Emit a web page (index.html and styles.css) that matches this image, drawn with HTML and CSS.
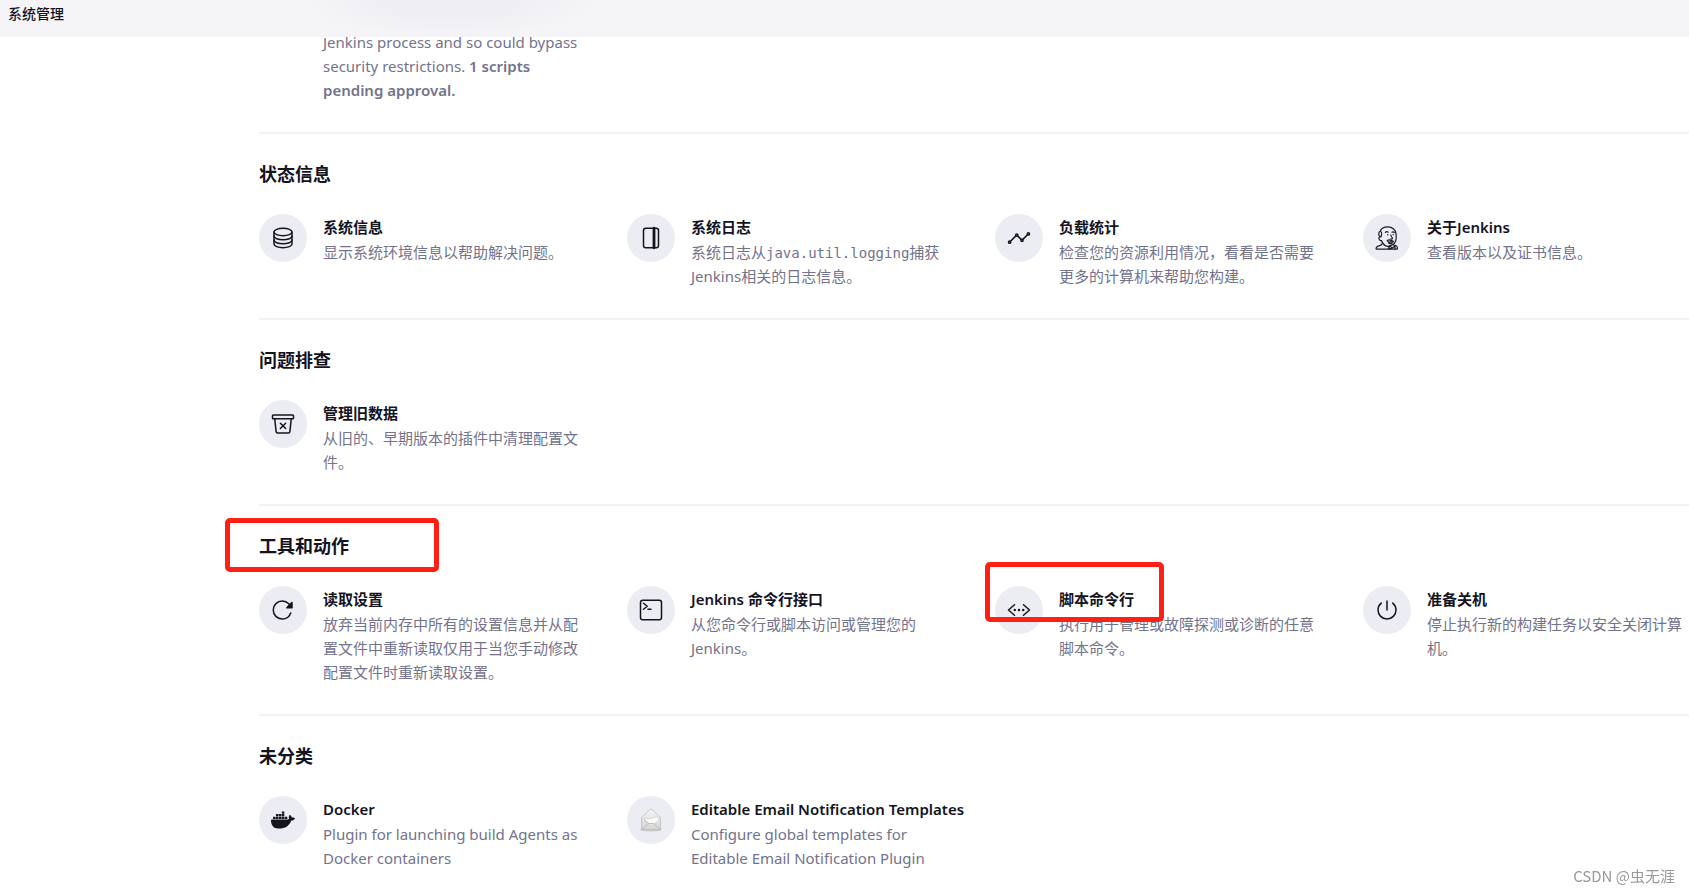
FILE: index.html
```
<!DOCTYPE html>
<html lang="zh-CN">
<head>
<meta charset="utf-8">
<title>系统管理</title>
<link rel="stylesheet" href="styles.css">
</head>
<body>
<header class="topbar"><h1 class="topbar-title">系统管理</h1></header>
<main class="content">
  <section class="section section-first">
    <div class="grid">
      <a class="item" href="#script-approval">
        <span class="spacer"></span>
        <span class="text"><span class="desc">Jenkins process and so could bypass security restrictions. <strong>1 scripts pending approval.</strong></span></span>
      </a>
    </div>
  </section>

  <section class="section">
    <h2 class="heading">状态信息</h2>
    <div class="grid">
      <a class="item" href="#system-info">
        <span class="icon"><svg viewBox="0 0 512 512"><g class="line"><ellipse cx="256" cy="128" rx="192" ry="80"/><path d="M448 214c0 44.18-86 80-192 80S64 258.18 64 214M448 300c0 44.18-86 80-192 80S64 344.18 64 300"/><path d="M64 127.24v257.52C64 428.52 150 464 256 464s192-35.48 192-79.24V127.24"/></g></svg></span>
        <span class="text"><span class="title">系统信息</span><span class="desc">显示系统环境信息以帮助解决问题。</span></span>
      </a>
      <a class="item" href="#log">
        <span class="icon"><svg viewBox="0 0 512 512"><g class="line"><rect x="96" y="48" width="320" height="416" rx="48"/><path class="spine" d="M320 48v416"/></g></svg></span>
        <span class="text"><span class="title">系统日志</span><span class="desc">系统日志从<code class="code">java.util.logging</code>捕获Jenkins相关的日志信息。</span></span>
      </a>
      <a class="item" href="#load-statistics">
        <span class="icon"><svg viewBox="0 0 512 512"><g class="line"><path d="M344 280l88-88M232 216l64 64M80 320l104-104"/><circle cx="456" cy="168" r="24"/><circle cx="320" cy="304" r="24"/><circle cx="208" cy="192" r="24"/><circle cx="56" cy="344" r="24"/></g></svg></span>
        <span class="text"><span class="title">负载统计</span><span class="desc">检查您的资源利用情况，看看是否需要更多的计算机来帮助您构建。</span></span>
      </a>
      <a class="item" href="#about">
        <span class="icon"><svg viewBox="0 0 24 24"><g class="sketch"><path d="M4.600 10.200C3.200 9 3.500 6 5.200 5.200 6.200 2.300 9.500.8 13 .8c4.200 0 7.400 3 8 6.700.5 3.400.3 7-1.300 9.400-.8 1.300-2 2-3.200 2.200"/><path d="M5.200 5.200c1 .4 1.600 1.500 1.500 2.900L5.900 11c-1.500-.7-2.500 1-1.700 2.500.5 1 1.500 1.200 2.300 1 .5 1.800 1.400 3.200 2.700 4.300"/><path d="M9 18.800c1.700 1.600 4.500 2 7 .4M7.300 17.500c-.8 1.100-.8 1.800-2.600 2.100-2 .3-3.200 1-3.600 2.600-.1.700.3 1 1 1h10.800l2-3M12.900 23.200h9.300c.5-.6.2-2.600-1-3.400-.8-.4-1.300-.3-2.300-.5"/><path d="M10.400 6.400c.7-.8 2-.8 2.800-.2M16.900 6.200c.8-.5 1.800-.2 2.300.5M15.800 9c.2 1.300 1.800 2.800 1.700 3.600-.4.800-1.300.6-2 .4"/><path d="M12.200 14.500c1.200-.8 3-.6 3.900.2 1-.4 2 .2 2.300 1-1 .6-1.800.3-2.400 0-1.500.7-3 .3-3.800-1.200zM13.500 17c1 .6 2.500.7 3.600.1M15 19.500l2 2.800 3-2.300M17 22.300l-3 .8M20 20v3"/></g><g class="solid"><circle cx="12.800" cy="8.800" r=".7"/><circle cx="18.200" cy="8.700" r=".6"/></g></svg></span>
        <span class="text"><span class="title">关于Jenkins</span><span class="desc">查看版本以及证书信息。</span></span>
      </a>
    </div>
  </section>

  <section class="section">
    <h2 class="heading">问题排查</h2>
    <div class="grid">
      <a class="item" href="#old-data">
        <span class="icon"><svg viewBox="0 0 512 512"><g class="line"><path d="M432 144l-28.67 275.74A32 32 0 01371.550 448H140.460a32 32 0 01-31.780-28.260L80 144"/><rect x="32" y="64" width="448" height="80" rx="16"/><path d="M312 240L200 352M312 352L200 240"/></g></svg></span>
        <span class="text"><span class="title">管理旧数据</span><span class="desc">从旧的、早期版本的插件中清理配置文件。</span></span>
      </a>
    </div>
  </section>

  <section class="section">
    <h2 class="heading">工具和动作<span class="mark mark-heading"></span></h2>
    <div class="grid">
      <a class="item" href="#reload">
        <span class="icon"><svg viewBox="0 0 512 512"><path class="line" d="M400 148l-21.120-24.570A191.430 191.430 0 00240 64C134 64 48 150 48 256s86 192 192 192a192.090 192.090 0 00181.070-128"/><path class="solid" d="M464 97.420V208a16 16 0 01-16 16H337.420c-14.260 0-21.400-17.230-11.320-27.310L436.690 86.100C446.770 76 464 83.160 464 97.420z"/></svg></span>
        <span class="text"><span class="title">读取设置</span><span class="desc">放弃当前内存中所有的设置信息并从配置文件中重新读取仅用于当您手动修改配置文件时重新读取设置。</span></span>
      </a>
      <a class="item" href="#cli">
        <span class="icon"><svg viewBox="0 0 512 512"><g class="line"><rect x="32" y="48" width="448" height="416" rx="48"/><path d="M96 112l80 64-80 64M192 240h64"/></g></svg></span>
        <span class="text"><span class="title">Jenkins 命令行接口</span><span class="desc">从您命令行或脚本访问或管理您的Jenkins。</span></span>
      </a>
      <a class="item" href="#script">
        <span class="icon"><svg viewBox="0 0 512 512"><g class="solid"><circle cx="256" cy="256" r="26"/><circle cx="346" cy="256" r="26"/><circle cx="166" cy="256" r="26"/></g><path class="line" d="M160 368L32 256l128-112M352 368l128-112-128-112"/></svg></span>
        <span class="text"><span class="title">脚本命令行</span><span class="desc">执行用于管理或故障探测或诊断的任意脚本命令。</span></span>
        <span class="mark mark-item"></span>
      </a>
      <a class="item" href="#shutdown">
        <span class="icon"><svg viewBox="0 0 512 512"><path class="line" d="M378 108a191.410 191.410 0 0170 148c0 106-86 192-192 192S64 362 64 256a192 192 0 0169-148M256 64v192"/></svg></span>
        <span class="text"><span class="title">准备关机</span><span class="desc">停止执行新的构建任务以安全关闭计算机。</span></span>
      </a>
    </div>
  </section>

  <section class="section">
    <h2 class="heading">未分类</h2>
    <div class="grid">
      <a class="item" href="#docker">
        <span class="icon"><svg viewBox="0 0 24 24"><path class="solid" d="M13.983 11.078h2.119a.186.186 0 00.186-.185V9.006a.186.186 0 00-.186-.186h-2.119a.185.185 0 00-.185.185v1.888c0 .102.083.185.185.185m-2.954-5.430h2.118a.186.186 0 00.186-.186V3.574a.186.186 0 00-.186-.185h-2.118a.185.185 0 00-.185.185v1.888c0 .102.082.185.185.185m0 2.716h2.118a.187.187 0 00.186-.186V6.290a.186.186 0 00-.186-.185h-2.118a.185.185 0 00-.185.185v1.887c0 .102.082.185.185.186m-2.930 0h2.120a.186.186 0 00.184-.186V6.290a.185.185 0 00-.185-.185H8.100a.185.185 0 00-.185.185v1.887c0 .102.083.185.185.186m-2.964 0h2.119a.186.186 0 00.185-.186V6.290a.185.185 0 00-.185-.185H5.136a.186.186 0 00-.186.185v1.887c0 .102.084.185.186.186m5.893 2.715h2.118a.186.186 0 00.186-.185V9.006a.186.186 0 00-.186-.186h-2.118a.185.185 0 00-.185.185v1.888c0 .102.082.185.185.185m-2.930 0h2.120a.185.185 0 00.184-.185V9.006a.185.185 0 00-.184-.186h-2.120a.185.185 0 00-.184.185v1.888c0 .102.083.185.185.185m-2.964 0h2.119a.185.185 0 00.185-.185V9.006a.185.185 0 00-.184-.186h-2.120a.186.186 0 00-.186.186v1.887c0 .102.084.185.186.185m-2.920 0h2.120a.185.185 0 00.184-.185V9.006a.185.185 0 00-.184-.186h-2.120a.185.185 0 00-.184.185v1.888c0 .102.082.185.185.185M23.763 9.890c-.065-.051-.672-.510-1.954-.510-.338.001-.676.030-1.010.087-.248-1.700-1.653-2.530-1.716-2.566l-.344-.199-.226.327c-.284.438-.490.922-.612 1.430-.230.970-.090 1.882.403 2.661-.595.332-1.550.413-1.744.420H.751a.751.751 0 00-.750.748 11.376 11.376 0 00.692 4.062c.545 1.428 1.355 2.480 2.410 3.124 1.180.723 3.100 1.137 5.275 1.137.983.003 1.963-.086 2.930-.266a12.248 12.248 0 003.823-1.389c.980-.567 1.860-1.288 2.610-2.136 1.252-1.418 1.998-2.997 2.553-4.400h.221c1.372 0 2.215-.549 2.680-1.009.309-.293.550-.650.707-1.046l.098-.288Z"/></svg></span>
        <span class="text"><span class="title">Docker</span><span class="desc">Plugin for launching build Agents as Docker containers</span></span>
      </a>
      <a class="item" href="#email-templates">
        <span class="icon"><svg viewBox="0 0 24 24"><defs><linearGradient id="paper" x1="0" y1="0" x2="0" y2="1"><stop offset="0" stop-color="#f4f4f2"/><stop offset="1" stop-color="#d6d6d4"/></linearGradient></defs><ellipse cx="12" cy="22" rx="11" ry="1.500" fill="#c9c9cc"/><path d="M2.500 21.500V9.500L11 1.500q1-1 2 0l8.500 8v12z" fill="url(#paper)" stroke="#bcbcba" stroke-width=".8"/><path d="M4.500 10.500q7.500 1.500 13.500-2l2 3.500-6 5h-4z" fill="#fafaf9" stroke="#c6c6c4" stroke-width=".6"/><path d="M3 21l7-5.500h4.500L21 21M5 12l5 3.500" fill="none" stroke="#b2b2b0" stroke-width=".8"/></svg></span>
        <span class="text"><span class="title">Editable Email Notification Templates</span><span class="desc">Configure global templates for Editable Email Notification Plugin</span></span>
      </a>
    </div>
  </section>
</main>
<div class="watermark">CSDN @虫无涯</div>
</body>
</html>
```
FILE: styles.css
```
* {
  box-sizing: border-box;
}

body {
  margin: 0;
  background: #fff;
  color: #14141f;
  font-family: "Noto Sans", "Noto Sans CJK SC", sans-serif;
  font-size: 15px;
  line-height: 24px;
}

.topbar {
  position: fixed;
  top: 0;
  left: 0;
  right: 0;
  z-index: 2;
  padding: 4px 8px 13px;
  background: radial-gradient(ellipse 150px 40px at 450px 0, #efeef3 40%, #f5f5f8) #f5f5f8;
}

.topbar-title {
  margin: 0;
  font-size: 14px;
  font-weight: 500;
  line-height: 20px;
}

.content {
  padding: 30px 0 0 259px;
}

.section {
  padding: 28px 0 30px;
  border-top: 2px solid #f3f3f8;
}

.section-first {
  padding-top: 0;
  border-top: 0;
}

.heading {
  position: relative;
  margin: 0 0 28px;
  font-size: 18px;
  font-weight: 600;
  line-height: 24px;
}

.grid {
  display: grid;
  grid-template-columns: repeat(4, minmax(0, 1fr));
  column-gap: 42px;
}

.item {
  position: relative;
  display: flex;
  gap: 16px;
  color: inherit;
  text-decoration: none;
}

.icon,
.spacer {
  flex: none;
  width: 48px;
}

.icon {
  display: flex;
  align-items: center;
  justify-content: center;
  height: 48px;
  border-radius: 50%;
  background: #ecedf3;
}

.icon svg {
  width: 24px;
  height: 24px;
}

.line {
  fill: none;
  stroke: #14141f;
  stroke-width: 32px;
  stroke-linecap: round;
  stroke-linejoin: round;
}

.spine {
  stroke-width: 60px;
}

.sketch {
  fill: none;
  stroke: #1c1c27;
  stroke-width: 1.2px;
  stroke-linecap: round;
  stroke-linejoin: round;
}

.solid {
  fill: #14141f;
}

.text {
  flex: 1;
  min-width: 0;
}

.title,
.desc {
  display: block;
}

.title {
  font-weight: 600;
  line-height: 26px;
  white-space: nowrap;
}

.desc {
  color: #73738c;
}

.desc strong {
  font-weight: 600;
}

.code {
  font-family: "DejaVu Sans Mono", monospace;
  font-size: 14px;
  line-height: 20px;
}

.mark {
  position: absolute;
  border: 5px solid #ff1f14;
  border-radius: 5px;
  pointer-events: none;
}

.mark-heading {
  top: -16px;
  left: -34px;
  width: 214px;
  height: 54px;
}

.mark-item {
  top: -24px;
  left: -10px;
  width: 179px;
  height: 60px;
}

.watermark {
  position: fixed;
  right: 14px;
  bottom: 5px;
  color: #999;
  font-family: "Noto Sans CJK SC", sans-serif;
  font-size: 15px;
}
```
